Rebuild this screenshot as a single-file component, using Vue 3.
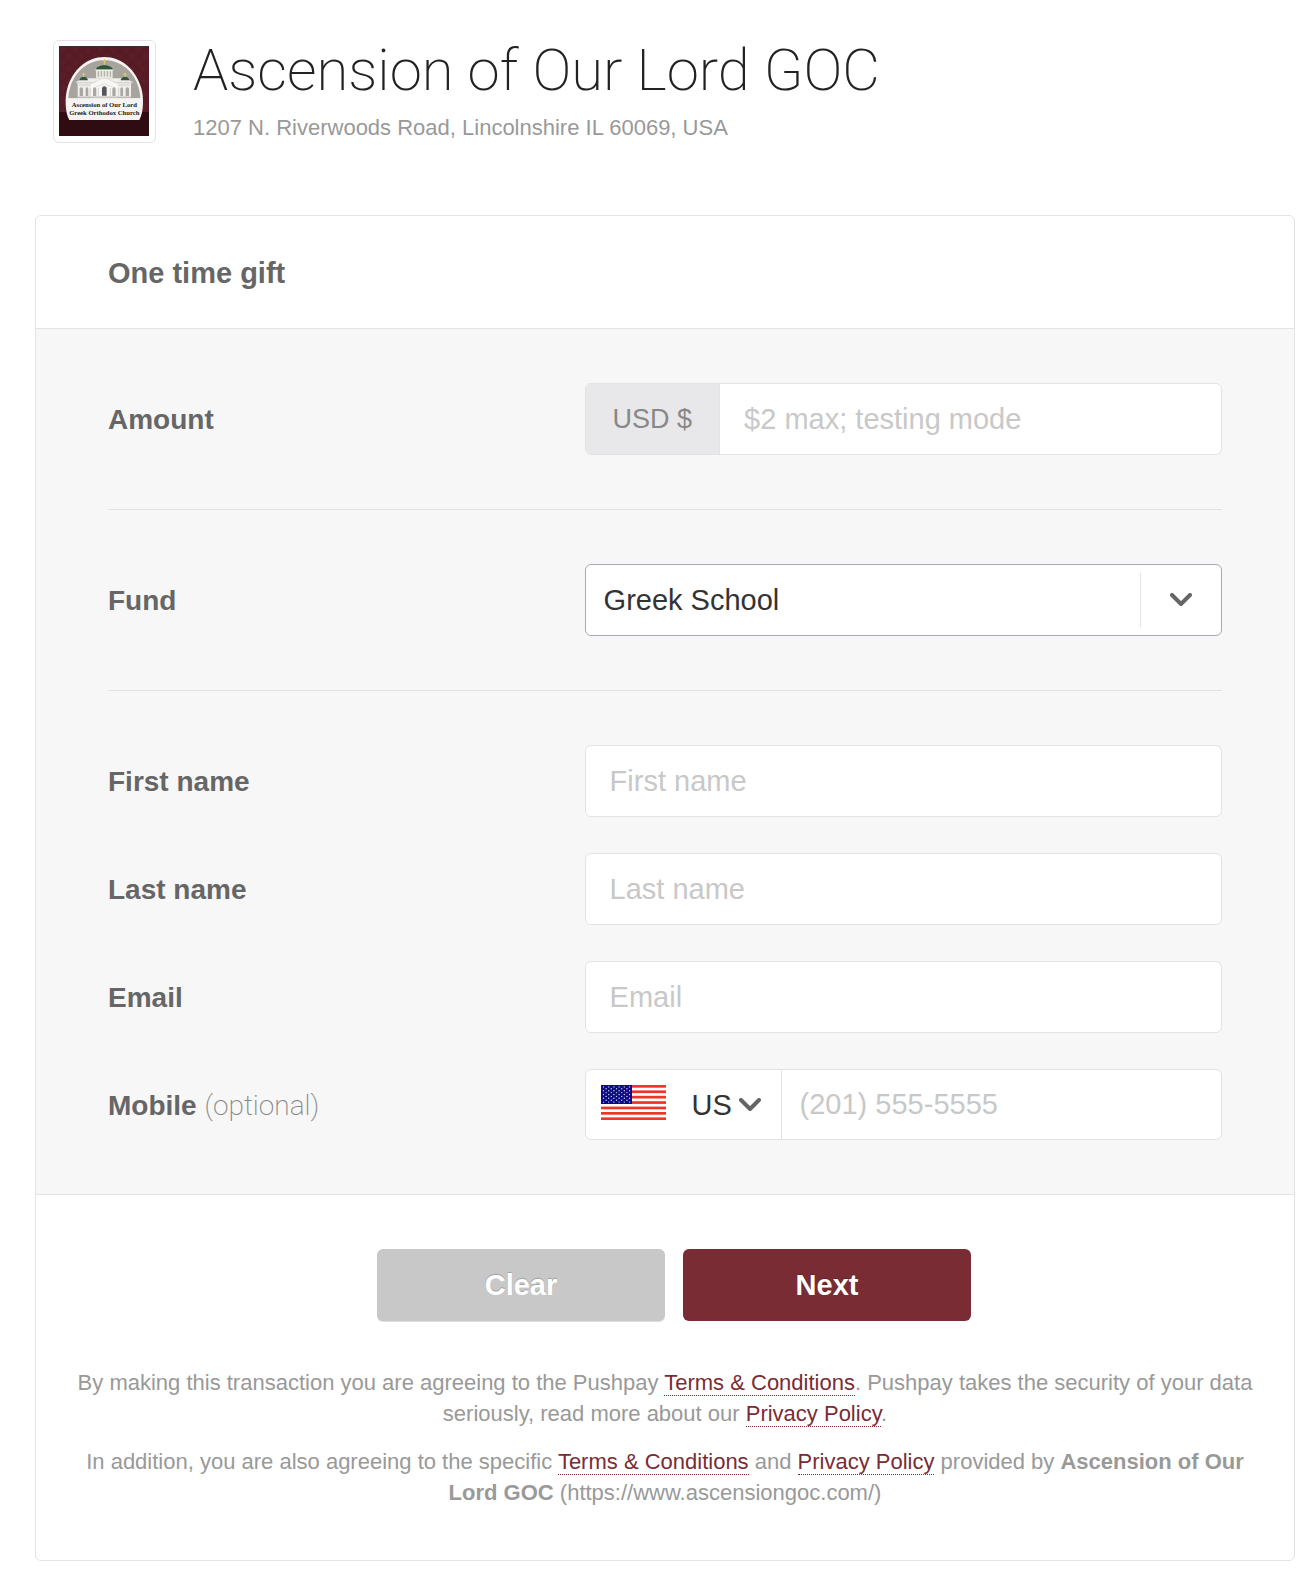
<template>
  <main class="page">
    <header class="org">
      <div class="org-logo">
        <svg viewBox="0 0 270 270" role="img" aria-label="Ascension of Our Lord Greek Orthodox Church">
          <defs>
            <pattern id="damask" width="38" height="38" patternUnits="userSpaceOnUse">
              <path d="M4 10c6-10 16-4 12 4s-12 2-8-3M22 30c6-10 16-4 12 4s-12 2-8-3" fill="none" stroke="#642430" stroke-width="2" />
            </pattern>
          </defs>
          <rect width="270" height="270" fill="#571b25" />
          <rect width="270" height="198" fill="url(#damask)" />
          <rect y="198" width="270" height="72" fill="#2e0c12" />
          <rect width="270" height="3" fill="#343238" />
          <path d="M31 222C18 200 17 155 25 127C40 72 84 33 136 33s96 39 111 94c8 28 7 73-6 95z" fill="#f5f4f3" />
          <path d="M28 158C30 92 78 42 136 42s106 50 108 116z" fill="#a7a39d" />
          <!-- side wings -->
          <path d="M52 107l22-10h124l22 10v5h-4v42H56v-42h-4z" fill="#efeeec" />
          <path d="M52 110h168M60 117h152" stroke="#c2bfba" stroke-width="2" />
          <!-- drum and domes -->
          <path d="M111 72h50v26h-50z" fill="#e6e5e1" />
          <path d="M118 76v16M127 75v16M136 75v16M145 75v16M154 76v16" stroke="#aaa69e" stroke-width="3" />
          <path d="M110 71c4-18 48-18 52 0z" fill="#2f5638" />
          <path d="M109 72h54" stroke="#f7f6f2" stroke-width="3" />
          <path d="M61 103c2-14 24-14 26 0zM185 103c2-14 24-14 26 0z" fill="#315739" />
          <path d="M136 38v18M130 44h12M74 80v13M69 85h10M198 80v13M193 85h10" fill="none" stroke="#e5ca70" stroke-width="3" />
          <!-- portico -->
          <path d="M95 111c15 0 24-16 41-16s26 16 41 16v43H95z" fill="#f8f7f5" />
          <path d="M94 112c18 0 23-15 42-15s24 15 42 15M109 123c13-1 16-9 27-9s14 8 27 9" fill="none" stroke="#d1cec9" stroke-width="2" />
          <path d="M129 149v-24q7-8 14 0v24z" fill="#55555b" />
          <path d="M62 150v-22q5-8 10 0v22zM80 150v-22q4-8 8 0v22zM102 150v-22q5-8 10 0v22zM160 150v-22q5-8 10 0v22zM184 150v-22q4-8 8 0v22zM200 150v-22q5-8 10 0v22z" fill="#aaa7a2" />
          <path d="M56 152h160M94 126v26M118 126v26M154 126v26M178 126v26" stroke="#d5d2cd" stroke-width="3" />
          <path d="M26 158h220" stroke="#f5f4f3" stroke-width="3" />
          <text x="136" y="183" text-anchor="middle" class="logo-text">Ascension of Our Lord</text>
          <text x="136" y="208" text-anchor="middle" class="logo-text">Greek Orthodox Church</text>
        </svg>
      </div>
      <div>
        <h1>Ascension of Our Lord GOC</h1>
        <p class="address">1207 N. Riverwoods Road, Lincolnshire IL 60069, USA</p>
      </div>
    </header>

    <form class="card" @submit.prevent>
      <h2>One time gift</h2>

      <div class="fields">
        <div class="row">
          <label for="amount">Amount</label>
          <div class="control">
            <span class="currency">USD $</span>
            <input id="amount" v-model="gift.amount" type="text" inputmode="decimal" placeholder="$2 max; testing mode" />
          </div>
        </div>
        <hr />

        <div class="row">
          <label for="fund">Fund</label>
          <div class="control fund">
            <select id="fund" v-model="gift.fund">
              <option>Greek School</option>
            </select>
            <span class="fund-arrow">
              <svg class="chevron" viewBox="0 0 22 14"><path d="M2 2l9 9 9-9" /></svg>
            </span>
          </div>
        </div>
        <hr />

        <div class="group">
          <div v-for="field in textFields" :key="field.id" class="row">
            <label :for="field.id">{{ field.label }}</label>
            <div class="control">
              <input :id="field.id" v-model="gift[field.id]" :type="field.type" :placeholder="field.label" />
            </div>
          </div>

          <div class="row">
            <label for="mobile">Mobile <span class="optional">(optional)</span></label>
            <div class="control phone">
              <div class="country">
                <select v-model="gift.country" aria-label="Country">
                  <option>US</option>
                </select>
                <svg class="flag" viewBox="0 0 65 35" preserveAspectRatio="none" aria-hidden="true">
                  <rect width="65" height="35" fill="#fff" />
                  <rect v-for="n in 7" :key="n" :y="(n - 1) * 5.4" width="65" height="2.7" fill="#ee3526" />
                  <rect width="31" height="19" fill="#0b0b86" />
                  <circle v-for="(s, i) in stars" :key="i" :cx="s.x" :cy="s.y" r="0.7" fill="#d5d5ee" />
                </svg>
                <svg class="chevron" viewBox="0 0 22 14"><path d="M2 2l9 9 9-9" /></svg>
              </div>
              <input id="mobile" v-model="gift.mobile" type="tel" placeholder="(201) 555-5555" />
            </div>
          </div>
        </div>
      </div>

      <footer>
        <div class="actions">
          <button type="button" class="clear" @click="clearForm">Clear</button>
          <button type="submit" class="next">Next</button>
        </div>
        <p>
          By making this transaction you are agreeing to the Pushpay <a href="#">Terms &amp; Conditions</a>.
          Pushpay takes the security of your data seriously, read more about our <a href="#">Privacy Policy</a>.
        </p>
        <p>
          In addition, you are also agreeing to the specific <a href="#">Terms &amp; Conditions</a> and
          <a href="#">Privacy Policy</a> provided by <strong>Ascension of Our Lord GOC</strong>
          (https://www.ascensiongoc.com/)
        </p>
      </footer>
    </form>
  </main>
</template>

<script setup>
import { ref } from 'vue';

const emptyGift = () => ({
  amount: '', fund: 'Greek School', firstName: '', lastName: '', email: '', country: 'US', mobile: '',
});

const gift = ref(emptyGift());
const clearForm = () => { gift.value = emptyGift(); };

const textFields = [
  { id: 'firstName', label: 'First name', type: 'text' },
  { id: 'lastName', label: 'Last name', type: 'text' },
  { id: 'email', label: 'Email', type: 'email' },
];

// nine alternating rows of six and five stars
const stars = [];
for (let r = 0; r < 9; r++) {
  const count = r % 2 ? 5 : 6;
  for (let c = 0; c < count; c++) {
    stars.push({ x: 2.5 + c * 5.2 + (r % 2 ? 2.6 : 0), y: 1.9 + r * 1.9 });
  }
}
</script>

<style>
body { margin: 0; background: #fff; }
</style>

<style scoped>
.page {
  padding: 40px 19px 14px 35px;
  font-family: "Liberation Sans", Arial, sans-serif; color: #666;
}
*, *::before, *::after { box-sizing: border-box; }

.org { display: flex; gap: 37px; padding-left: 18px; margin-bottom: 72px; }
.org-logo {
  flex: none; width: 103px; height: 103px; padding: 5px;
  border: 1px solid #e3e3e7; border-radius: 6px;
}
.org-logo svg { display: block; width: 90px; height: 90px; }
.logo-text { font: bold 20px "Liberation Serif", serif; fill: #222; }
h1 {
  margin: 0; font-family: Roboto, "Liberation Sans", sans-serif;
  font-size: 58px; line-height: 60px; font-weight: 200; color: #222;
}
.address { margin: 12px 0 0; font-size: 22px; line-height: 31px; color: #999; }

.card { border: 1px solid #e3e3e7; border-radius: 6px; overflow: hidden; }
h2 { margin: 0; padding: 41px 72px 39px; font-size: 29px; line-height: 32px; }
.fields { padding: 54px 72px; background: #f7f7f7; border-top: 1px solid #e3e3e7; }
.group { display: flex; flex-direction: column; gap: 36px; }
.row { display: flex; align-items: center; }
label { flex: 3; padding-top: 2px; font-size: 28px; line-height: 32px; font-weight: bold; }
.optional { font-family: Roboto, "Liberation Sans", sans-serif; font-weight: 200; color: #888; }
hr { margin: 54px 0; border: 0; border-top: 1px solid #e3e3e7; }

.control {
  flex: 4; display: flex; height: 72px; overflow: hidden;
  background: #fff; border: 1px solid #e3e3e7; border-radius: 6px;
}
.currency {
  display: flex; align-items: center; padding: 0 27px;
  background: #e8e8ea; border-right: 1px solid #e3e3e7; font-size: 27px; color: #888;
}
input, select {
  min-width: 0; border: 0; outline: 0; background: transparent;
  font-family: inherit; font-size: 29px; color: #333;
}
input { flex: 1; padding: 0 24px; }
input::placeholder { color: #c8c8c8; opacity: 1; }
select { appearance: none; grid-row: 1; grid-column: 1 / -1; }

.fund { display: grid; grid-template-columns: 1fr 81px; border-color: #a9a7b9; }
.fund select { padding: 0 18px; }
.fund-arrow {
  grid-row: 1; grid-column: 2; display: flex; align-items: center; justify-content: center;
  margin: 8px 0; border-left: 1px solid #e3e3e7; pointer-events: none;
}
.chevron { display: block; width: 22px; height: 14px; }
.chevron path { fill: none; stroke: #666; stroke-width: 4; stroke-linecap: round; stroke-linejoin: round; }

.phone { height: 71px; }
.phone input { padding: 0 18px; }
.country {
  display: grid; grid-template-columns: 153px 42px; align-items: center;
  border-right: 1px solid #e3e3e7;
}
.country select { height: 100%; padding: 0 0 0 106px; }
.country .flag { grid-row: 1; grid-column: 1; width: 65px; height: 35px; margin: 0 0 4px 15px; pointer-events: none; }
.country .chevron { grid-row: 1; grid-column: 2; pointer-events: none; }

footer { padding: 54px 40px 52px; border-top: 1px solid #e3e3e7; text-align: center; }
.actions { display: flex; justify-content: center; gap: 18px; padding-left: 18px; margin-bottom: 46px; }
button {
  width: 288px; height: 72px; border: 0; border-radius: 6px;
  font-family: inherit; font-size: 29px; font-weight: bold; color: #fff; cursor: pointer;
}
.clear { background: #c8c8c8; text-shadow: 0 -1px 1px rgba(0,0,0,.2); box-shadow: 0 1px 0 #ddd; }
.next { background: #7a2c34; text-shadow: 0 -1px 1px rgba(0,0,0,.2); }
footer p { margin: 0 0 17px; font-size: 22px; line-height: 31px; color: #999; }
footer p:last-child { margin: 0; }
footer a { color: #7a2c34; text-decoration: none; border-bottom: 1px dotted #7a2c34; }
</style>
